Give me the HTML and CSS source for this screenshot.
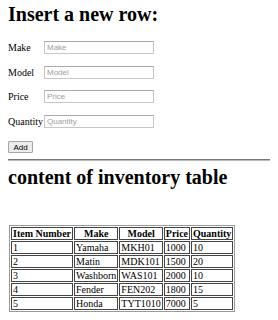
FILE: index.html
```html
<!DOCTYPE html>
<html lang="en">
<head>
  <meta charset="UTF-8">
  <meta name="viewport" content="width=device-width, initial-scale=1.0">
  <title>Inventory</title>
  <link rel="stylesheet" href="styles.css">
</head>
<body>
  <h1 class="titulo">Insert a new row:</h1>

  <form class="formulario" onsubmit="return false;">
    <div class="linha">
      <label for="make">Make</label>
      <input type="text" id="make" placeholder="Make">
    </div>
    <div class="linha">
      <label for="model">Model</label>
      <input type="text" id="model" placeholder="Model">
    </div>
    <div class="linha">
      <label for="price">Price</label>
      <input type="text" id="price" placeholder="Price">
    </div>
    <div class="linha">
      <label for="quantity">Quantity</label>
      <input type="text" id="quantity" placeholder="Quantity">
    </div>
    <button type="submit" class="btn-add">Add</button>
  </form>

  <hr class="divisor">

  <h1 class="titulo-tabela">content of inventory table</h1>

  <table class="inventario">
    <tr>
      <th>Item Number</th>
      <th>Make</th>
      <th>Model</th>
      <th>Price</th>
      <th>Quantity</th>
    </tr>
    <tr><td>1</td><td>Yamaha</td><td>MKH01</td><td>1000</td><td>10</td></tr>
    <tr><td>2</td><td>Matin</td><td>MDK101</td><td>1500</td><td>20</td></tr>
    <tr><td>3</td><td>Washborn</td><td>WAS101</td><td>2000</td><td>10</td></tr>
    <tr><td>4</td><td>Fender</td><td>FEN202</td><td>1800</td><td>15</td></tr>
    <tr><td>5</td><td>Honda</td><td>TYT1010</td><td>7000</td><td>5</td></tr>
  </table>
</body>
</html>
```

FILE: styles.css
```css
body {
  margin: 0 8px;
  font-family: "Liberation Serif", "Times New Roman", serif;
  font-size: 10px;
  color: #000;
  background: #fff;
}
.titulo {
  font-size: 20px;
  margin: 3px 0 15px;
}
.formulario {
  display: flex;
  flex-direction: column;
  align-items: flex-start;
  gap: 11.5px;
}
.linha {
  display: flex;
  align-items: center;
}
.linha label {
  width: 36px;
  white-space: nowrap;
}
.linha input {
  width: 110px;
  height: 13px;
  box-sizing: border-box;
  padding: 0 2px;
  border: 1px solid #c6c6c6;
  border-top-color: #a9a9a9;
  font-family: "Liberation Sans", Arial, sans-serif;
  font-size: 8px;
}
.linha input::placeholder {
  color: #a0a0a0;
}
.btn-add {
  margin-top: 2px;
  width: 25px;
  height: 12px;
  padding: 0;
  box-sizing: border-box;
  background: #ececec;
  border: 1px solid #a6a6a6;
  border-radius: 1px;
  font-family: "Liberation Sans", Arial, sans-serif;
  font-size: 8px;
  color: #000;
}
.divisor {
  margin: 6px -8px 5px 0;
  border: 0;
  border-top: 1px solid #777;
  border-bottom: 1px solid #bbb;
}
.titulo-tabela {
  font-size: 20px;
  margin: 0 0 36px;
}
.inventario {
  border: 1px solid #999;
  border-spacing: 1px;
  margin-left: 1px;
}
.inventario th,
.inventario td {
  border: 1px solid #444;
  padding: 0 1px;
  line-height: 11px;
  white-space: nowrap;
}
.inventario td {
  text-align: left;
}
```
